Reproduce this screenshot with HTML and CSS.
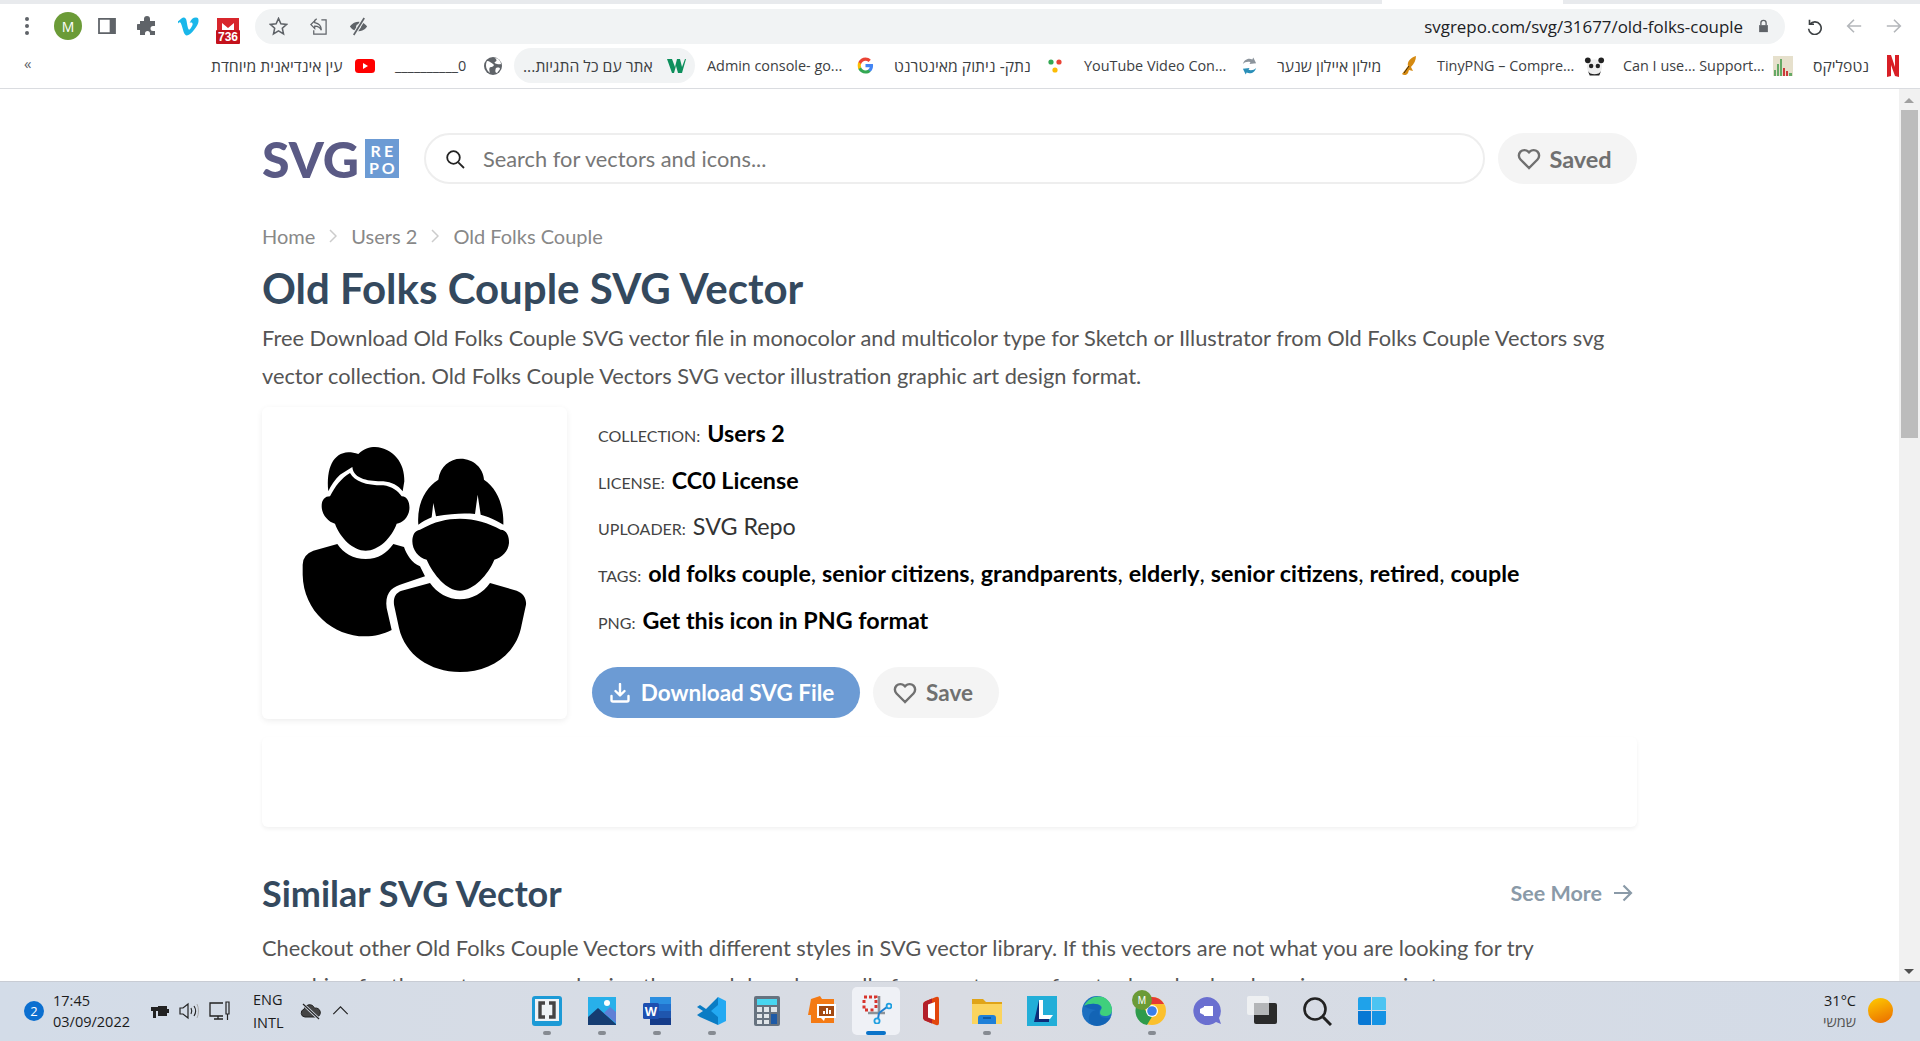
FILE: index.html
```html
<!DOCTYPE html>
<html>
<head>
  <title>Old Folks Couple SVG Vector</title>
  <link rel="stylesheet" href="styles.css">
</head>
<body>
  <div class="tabstrip"><div class="tab-gap"></div></div>

  <div class="toolbar">
    <div class="tool-dots"><i></i><i></i><i></i></div>
    <div class="avatar">M</div>
    <svg class="tool tool-panel" viewBox="0 0 20 18"><path d="M1 1h18v16H1z" fill="none" stroke="#5f6368" stroke-width="2"/><path d="M13 1h6v16h-6z" fill="#5f6368"/></svg>
    <svg class="tool tool-puzzle" viewBox="0 0 20 20"><path d="M7 3a3 3 0 0 1 6 0v2h5v5h-2a2.500 2.500 0 0 0 0 5h2v4h-5v-1.500a2.500 2.500 0 0 0-5 0V19H3v-5H1.500a3 3 0 0 1 0-6H3V5h4z" fill="#5f6368"/></svg>
    <svg class="tool tool-vimeo" viewBox="0 0 22 20"><path d="M21.500 5c-.1 2.200-1.600 5.100-4.600 9-3 4-5.600 5.900-7.700 5.900-1.300 0-2.400-1.200-3.300-3.600L4 9.800C3.300 7.400 2.600 6.200 1.800 6.200c-.2 0-.8.400-1.800 1.100L-1 6c1.100-1 2.200-2 3.300-2.900C3.800 1.800 4.900 1.100 5.700 1c1.800-.2 2.900 1.100 3.300 3.800.5 2.900.8 4.700 1 5.400.5 2.400 1.100 3.600 1.700 3.600.5 0 1.200-.7 2.100-2.200.9-1.400 1.400-2.500 1.500-3.300.1-1.200-.4-1.900-1.500-1.900-.5 0-1.100.1-1.600.4C13.800 2.700 16 1 19 1.100c2.100 0 2.600 1.400 2.500 3.900z" fill="#1ab7ea"/></svg>
    <div class="gmail">
      <svg viewBox="0 0 24 12"><path d="M1 0h22v12h-5V5l-6 5-6-5v7H1z" fill="#d8262c"/></svg>
      <span>736</span>
    </div>
    <div class="address">
      <div class="address-left">
        <svg class="tool-small" viewBox="0 0 20 20"><path d="M10 1.500l2.500 5.700 6 .6-4.500 4 1.300 6L10 14.700l-5.300 3.100 1.300-6-4.500-4 6-.6z" fill="none" stroke="#5f6368" stroke-width="1.600"/></svg>
        <svg class="tool-small" viewBox="0 0 20 20"><path d="M8 2L2 8l4 4V9.500c4 0 6 1.500 7 4.500 0-4-2-7-7-8V3.500zM13 3h5v15H5v-4" fill="none" stroke="#5f6368" stroke-width="1.300"/></svg>
        <svg class="tool-small" viewBox="0 0 20 20"><path d="M1 10s3-5 9-5 9 5 9 5-3 5-9 5-9-5-9-5z" fill="#5f6368"/><circle cx="10" cy="10" r="2.500" fill="#f1f3f4"/><path d="M16 1L5 19" stroke="#f1f3f4" stroke-width="4"/><path d="M16 1L5 19" stroke="#5f6368" stroke-width="1.800"/></svg>
      </div>
      <div class="address-right">
        <span class="url">svgrepo.com/svg/31677/old-folks-couple</span>
        <svg class="lock" viewBox="0 0 12 16"><path d="M3 7V4.500a3 3 0 0 1 6 0V7" fill="none" stroke="#5f6368" stroke-width="1.500"/><path d="M1 7h10v8H1z" fill="#5f6368"/></svg>
      </div>
    </div>
    <svg class="nav" viewBox="0 0 20 20"><path d="M5 3v5h5M5.500 8A7 7 0 1 1 4 13" fill="none" stroke="#3c4043" stroke-width="1.800"/></svg>
    <svg class="nav" viewBox="0 0 20 20"><path d="M18 10H3M10 3l-7 7 7 7" fill="none" stroke="#b4b7bb" stroke-width="1.800"/></svg>
    <svg class="nav" viewBox="0 0 20 20"><path d="M2 10h15M10 3l7 7-7 7" fill="none" stroke="#b4b7bb" stroke-width="1.800"/></svg>
  </div>

  <div class="bookmarks">
    <span class="more">«</span>
    <div class="bookmark he bm-india">
      <span>עין אינדיאנית מיוחדת</span>
      <svg viewBox="0 0 20 14"><rect width="20" height="14" rx="3.500" fill="#f00"/><path d="M8 4l5 3-5 3z" fill="#fff"/></svg>
    </div>
    <div class="bookmark bm-blank">
      <span>__________0</span>
      <svg viewBox="0 0 18 18"><circle cx="9" cy="9" r="9" fill="#5f6368"/><path d="M3 4c3 0 4 2 6 3s0 3-2 3-2 3-1 6C2 13 1 8 3 4zM11 1c2 2 2 3 0 4s3 3 6 2c0-3-3-6-6-6zM12 11c3-1 4 0 4 1l-3 4c-2 0-2-3-1-5z" fill="#fff"/></svg>
    </div>
    <div class="bookmark he bm-active">
      <span>...אתר עם כל התגיות</span>
      <svg viewBox="0 0 22 16"><path d="M0 1h5l3 8 2-8h3l2 8 3-8h1l-4 14h-4l-2-7-2 7H5z" fill="#0d8f5c"/></svg>
    </div>
    <div class="bookmark bm-admin">
      <span>Admin console- go...</span>
      <svg viewBox="0 0 18 18"><path d="M17 9.200c0-.6 0-1.200-.2-1.700H9v3.300h4.500c-.2 1-.8 1.900-1.700 2.500v2h2.700C16 14 17 11.800 17 9.200z" fill="#4285f4"/><path d="M9 17.500c2.200 0 4.100-.7 5.500-2l-2.700-2c-.8.500-1.700.8-2.800.8-2.200 0-4-1.500-4.700-3.400H1.500v2.100C2.900 15.700 5.700 17.500 9 17.500z" fill="#34a853"/><path d="M4.300 10.900c-.4-1.100-.4-2.300 0-3.400V5.400H1.500c-1 1.900-1 4.800 0 7.600z" fill="#fbbc05"/><path d="M9 4c1.200 0 2.300.4 3.200 1.200l2.400-2.400C13.100 1.400 11.200.600 9 .600 5.700.600 2.900 2.500 1.500 5.400l2.800 2.100C5 5.500 6.800 4 9 4z" fill="#ea4335"/></svg>
    </div>
    <div class="bookmark he bm-net">
      <span>נתק- ניתוק מאינטרנט</span>
      <svg viewBox="0 0 14 14"><circle cx="3" cy="3" r="2.600" fill="#34a853"/><circle cx="11" cy="3" r="2.600" fill="#ea4335"/><circle cx="7" cy="11" r="2.600" fill="#fbbc05"/></svg>
    </div>
    <div class="bookmark bm-ytc">
      <span>YouTube Video Con...</span>
      <svg viewBox="0 0 18 20"><path d="M2 8c1-4 5-7 10-5l1-2 3 6-7 1 1-2C7 5 4 6 2 8z" fill="#8c949c"/><path d="M16 12c-1 4-5 7-10 5l-1 2-3-6 7-1-1 2c3 1 6 0 8-2z" fill="#2a8fb8"/></svg>
    </div>
    <div class="bookmark he bm-dict">
      <span>מילון איילון שנער</span>
      <svg viewBox="0 0 16 20"><path d="M15 0C9 2 6 6 7 10L1 18c2 2 5 1 6-1l1-3 4 1-2-4c3-3 5-7 5-11z" fill="#d58a12"/><path d="M3 17l5-7" stroke="#3a2a10" stroke-width="1"/></svg>
    </div>
    <div class="bookmark bm-tiny">
      <span>TinyPNG – Compre...</span>
      <svg viewBox="0 0 22 20"><ellipse cx="11" cy="11" rx="8" ry="8" fill="#eee"/><circle cx="4" cy="4" r="3" fill="#222"/><circle cx="18" cy="4" r="3" fill="#222"/><circle cx="7.500" cy="10" r="2.300" fill="#222"/><circle cx="14.500" cy="10" r="2.300" fill="#222"/><path d="M4 15c2 5 12 5 14 0l-2 5H6z" fill="#222"/></svg>
    </div>
    <div class="bookmark bm-caniuse">
      <span>Can I use... Support...</span>
      <svg viewBox="0 0 20 20"><path d="M0 0h20v20H0z" fill="#e6e0cc"/><path d="M1 14h2v6H1zM4 8h2v12H4zM7 3h2v17H7z" fill="#66aa66"/><path d="M10 12h2v8h-2zM13 15h2v5h-2z" fill="#cc3b3b"/><path d="M16 17h3v3h-3z" fill="#66aa66"/></svg>
    </div>
    <div class="bookmark he bm-netflix">
      <span>נטפליקס</span>
      <svg viewBox="0 0 12 22"><path d="M0 0h4l4 12V0h4v22l-4-1L4 10v11l-4 1z" fill="#d81f26"/></svg>
    </div>
  </div>

  <div class="window">
    <div class="page">
      <div class="container">
        <header class="site-header">
          <a class="logo"><span class="logo-svg">SVG</span><span class="logo-repo"><b>RE</b><b>PO</b></span></a>
          <div class="search">
            <svg viewBox="0 0 20 20"><circle cx="8.500" cy="8.500" r="6.300" fill="none" stroke="#222" stroke-width="1.800"/><path d="M13.300 13.300L19 19" stroke="#222" stroke-width="1.800"/></svg>
            <span>Search for vectors and icons...</span>
          </div>
          <div class="btn btn-light btn-saved">
            <svg class="heart" viewBox="0 0 24 22"><path d="M12 20L3.500 11.500a5.500 5.500 0 0 1 0-7.800 5.500 5.500 0 0 1 7.800 0l.7.700.7-.7a5.500 5.500 0 0 1 7.800 7.800z" fill="none" stroke="#707070" stroke-width="2.400"/></svg>
            <span>Saved</span>
          </div>
        </header>

        <nav class="crumbs">
          <span>Home</span>
          <svg viewBox="0 0 8 14"><path d="M1 1l6 6-6 6" fill="none" stroke="#ccc" stroke-width="1.500"/></svg>
          <span>Users 2</span>
          <svg viewBox="0 0 8 14"><path d="M1 1l6 6-6 6" fill="none" stroke="#ccc" stroke-width="1.500"/></svg>
          <span>Old Folks Couple</span>
        </nav>

        <h1>Old Folks Couple SVG Vector</h1>
        <p class="lead">Free Download Old Folks Couple SVG vector file in monocolor and multicolor type for Sketch or Illustrator from Old Folks Couple Vectors svg vector collection. Old Folks Couple Vectors SVG vector illustration graphic art design format.</p>

        <section class="detail">
          <div class="preview">
            <svg viewBox="36 27 915 936">
              <path d="M262 438L190 458Q158 470 158 500L158 530C160 640 250 715 345 715C375 715 400 708 425 696L410 630C405 590 420 570 450 560L525 535L510 505C485 495 470 470 462 447L430 438C410 465 385 483 347 483C310 483 280 465 262 438Z"/>
              <path d="M240 295C255 265 275 240 300 225C315 250 345 262 400 262C425 265 445 280 455 295C475 295 480 320 478 335C475 360 455 375 440 377C425 420 385 458 347 458C310 458 270 420 255 377C235 372 215 350 215 325C215 305 225 295 240 295Z"/>
              <path d="M235 280C228 210 250 165 295 163C305 163 315 165 325 168C340 152 360 147 375 147C430 150 465 195 463 250L458 280C445 262 425 252 400 250C360 250 310 245 307 207L270 230C255 245 242 262 235 280Z"/>
              <path d="M540 555L455 578C435 585 430 600 432 620L447 690C465 770 540 822 630 822C720 822 800 770 815 680L828 620C830 600 818 585 800 578L720 555C700 585 665 604 630 604C595 604 560 585 540 555Z"/>
              <path d="M510 395C555 370 590 362 630 362C675 362 715 375 752 395C770 395 778 415 777 435C775 460 755 480 733 485C715 530 670 578 630 578C590 578 550 530 530 485C505 480 487 455 487 430C487 410 495 397 510 395Z"/>
              <path d="M505 380C500 320 525 270 565 245C570 205 600 182 632 182C670 182 700 210 702 245C740 270 762 320 760 380C730 360 695 350 692 350L683 290L675 348C650 345 610 345 558 355L550 315L545 358C530 365 515 372 505 380Z"/>
            </svg>
          </div>
          <div class="info">
            <div class="info-row"><small>COLLECTION:</small> <b>Users 2</b></div>
            <div class="info-row"><small>LICENSE:</small> <b>CC0 License</b></div>
            <div class="info-row"><small>UPLOADER:</small> <span class="plain">SVG Repo</span></div>
            <div class="info-row"><small>TAGS:</small> <b>old folks couple</b>, <b>senior citizens</b>, <b>grandparents</b>, <b>elderly</b>, <b>senior citizens</b>, <b>retired</b>, <b>couple</b></div>
            <div class="info-row"><small>PNG:</small> <b>Get this icon in PNG format</b></div>
            <div class="actions">
              <div class="btn btn-blue">
                <svg viewBox="0 0 20 20"><path d="M10 1v11M5.500 8l4.500 4.500L14.500 8M1.500 13v4a1.500 1.500 0 0 0 1.500 1.500h14a1.500 1.500 0 0 0 1.500-1.500v-4" fill="none" stroke="#fff" stroke-width="2.400" stroke-linecap="round" stroke-linejoin="round"/></svg>
                <span>Download SVG File</span>
              </div>
              <div class="btn btn-light btn-save">
                <svg class="heart" viewBox="0 0 24 22"><path d="M12 20L3.500 11.500a5.500 5.500 0 0 1 0-7.800 5.500 5.500 0 0 1 7.800 0l.7.700.7-.7a5.500 5.500 0 0 1 7.800 7.800z" fill="none" stroke="#707070" stroke-width="2.400"/></svg>
                <span>Save</span>
              </div>
            </div>
          </div>
        </section>

        <div class="ad-card"></div>

        <div class="similar-head">
          <h2>Similar SVG Vector</h2>
          <div class="see-more">
            <span>See More</span>
            <svg viewBox="0 0 20 18"><path d="M1 9h17M10.500 1.500L18 9l-7.500 7.500" fill="none" stroke="#8a9aa8" stroke-width="2.200"/></svg>
          </div>
        </div>
        <p class="lead">Checkout other Old Folks Couple Vectors with different styles in SVG vector library. If this vectors are not what you are looking for try<br>searching for the vector you need using the search bar above, all of our vectors are free to download and use in your projects.</p>
      </div>
    </div>
    <div class="scrollbar">
      <i class="arrow-up"></i>
      <div class="thumb"></div>
      <i class="arrow-down"></i>
    </div>
  </div>

  <footer class="taskbar">
    <div class="tray">
      <span class="badge">2</span>
      <div class="clock"><span>17:45</span><span>03/09/2022</span></div>
      <svg class="tray-plug" viewBox="0 0 20 18"><path d="M3 1v4M6 1v4M1 5h7v4H6v7H3V9H1z" fill="#222"/><path d="M8 4h9v10H8z" fill="#222"/><path d="M17 7h2v4h-2z" fill="#222"/></svg>
      <svg class="tray-sound" viewBox="0 0 20 18"><path d="M1 6h3l5-4v14l-5-4H1z" fill="none" stroke="#222" stroke-width="1.200"/><path d="M12 6c1 2 1 4 0 6M15 4c2 3 2 7 0 10" fill="none" stroke="#222" stroke-width="1.100"/><path d="M18 2c2 4 2 10 0 14" fill="none" stroke="#aaa" stroke-width="1"/></svg>
      <svg class="tray-net" viewBox="0 0 22 20"><path d="M14 2H1v13h13M5 18h9M9 15v3" fill="none" stroke="#222" stroke-width="1.300"/><path d="M17 1h3v12h-3zM18.500 13v6" fill="none" stroke="#222" stroke-width="1.200"/></svg>
      <div class="lang"><span>ENG</span><span>INTL</span></div>
      <svg class="tray-cloud" viewBox="0 0 22 18"><path d="M5 15a4 4 0 0 1-1-7.800 5.500 5.500 0 0 1 10.500-1A4.500 4.500 0 0 1 17 15z" fill="#444" stroke="#222"/><path d="M3 2l16 15" stroke="#d6dde8" stroke-width="3"/><path d="M3 2l16 15" stroke="#222" stroke-width="1.200"/></svg>
      <svg class="tray-up" viewBox="0 0 18 10"><path d="M1 9l8-8 8 8" fill="none" stroke="#222" stroke-width="1.300"/></svg>
    </div>

    <div class="apps">
      <div class="app running">
        <svg viewBox="0 0 30 30"><rect width="30" height="30" rx="3" fill="#1c9ad6"/><rect x="3" y="3" width="24" height="22" fill="#eef3f6"/><path d="M13 7H8v14h5M17 7h5v14h-5" fill="none" stroke="#444" stroke-width="3.400"/></svg>
      </div>
      <div class="app running">
        <svg viewBox="0 0 30 30"><path d="M1 1h28v28H1z" fill="#28b0ea"/><circle cx="20" cy="7" r="3" fill="#fff"/><path d="M1 21L11 12l18 16v1H1z" fill="#163d72"/><path d="M17 17l6-6 6 5v11z" fill="#5f7fd6"/></svg>
      </div>
      <div class="app running">
        <svg viewBox="0 0 30 30"><path d="M8 1h21v7H8z" fill="#2b8ee0"/><path d="M8 8h21v7H8z" fill="#2270cc"/><path d="M8 15h21v7H8z" fill="#1f56ae"/><path d="M8 22h21v7H8z" fill="#153c8a"/><rect x="1" y="7" width="16" height="16" rx="1.500" fill="#1d4fb0"/><text x="9" y="19.500" class="app-letter">W</text></svg>
      </div>
      <div class="app running">
        <svg viewBox="0 0 30 30"><path d="M21 1L9 13 3 9l-3 2 6 4-6 4 3 2L21 29z" fill="#0a7cc4"/><path d="M21 1l8 4v20l-8 4V21l-7-6 7-6z" fill="#23a9f2"/></svg>
      </div>
      <div class="app">
        <svg viewBox="0 0 30 30"><rect x="2" width="26" height="30" rx="2" fill="#66727f"/><path d="M5 3h20v6H5z" fill="#48d6f0"/><path d="M5 11h5v5H5zM12 11h5v5h-5zM19 11h6v5h-6zM5 18h5v4H5zM12 18h5v4h-5zM5 24h5v4H5zM12 24h5v4h-5z" fill="#dfe4e8"/><path d="M19 18h6v10h-6z" fill="#1d5aa6"/></svg>
      </div>
      <div class="app">
        <svg viewBox="0 0 30 30"><path d="M4 3l9-3 2 3h12v24H4v-8H1z" fill="#f47a14"/><path d="M10 8h19v14H18l-1 3-3-3h-4z" fill="#fff"/><path d="M12 10h15v10H12z" fill="#a34a12"/><path d="M16 18v-3h2v3zM19 18v-6h2v6zM22 18v-4h2v4z" fill="#fff"/></svg>
      </div>
      <div class="app active">
        <svg viewBox="0 0 30 30"><path d="M2 3h12v12" fill="none" stroke="#d8342c" stroke-width="3" stroke-dasharray="3 2"/><path d="M2 6v10h10" fill="none" stroke="#d8342c" stroke-width="3" stroke-dasharray="3 2.500"/><path d="M17 2v18M6 19h17" stroke="#8c9298" stroke-width="2.600" fill="none"/><path d="M17 19L25 13" stroke="#1f7fd0" stroke-width="2"/><circle cx="27" cy="12" r="2.400" fill="none" stroke="#1f9fe0" stroke-width="1.800"/><path d="M17 19l-1 6" stroke="#1f7fd0" stroke-width="2"/><circle cx="15" cy="27" r="2.600" fill="none" stroke="#1f9fe0" stroke-width="1.800"/></svg>
      </div>
      <div class="app">
        <svg viewBox="0 0 30 30"><path d="M9 5l10-4q3-1 3 2v24q0 3-3 2L9 25q-3-1-3-4V9q0-3 3-4z" fill="#e2460c"/><path d="M9 5l6-2.400V7L11 8.500V21.500l4 1.500v4.400L9 25q-3-1-3-4V9q0-3 3-4z" fill="#b3202a"/><path d="M11 8.500L18 6v18l-7-2.500z" fill="#fff"/></svg>
      </div>
      <div class="app running">
        <svg viewBox="0 0 30 30"><path d="M0 3h11l3 3h16v22H0z" fill="#e0a418"/><path d="M0 8h30v20H0z" fill="#fbd45e"/><path d="M9 19h12a3 3 0 0 1 3 3v6H6v-6a3 3 0 0 1 3-3z" fill="#1f80d8"/><path d="M11 22h8" stroke="#0d4f94" stroke-width="1.500"/></svg>
      </div>
      <div class="app">
        <svg viewBox="0 0 30 30"><path d="M0 0h30v30H0z" fill="#22aed8"/><path d="M7 26L12 4v18h10v4z" fill="#0c2c78"/><path d="M12 4h4v15h10l-3 4H12z" fill="#fff"/></svg>
      </div>
      <div class="app">
        <svg viewBox="0 0 30 30"><circle cx="15" cy="15" r="15" fill="#1c6fc0"/><path d="M2 10C6 2 14-1 21 1c5 2 9 7 9 13 0 4-3 6-7 6-3 0-5-1-5-3 0-4 3-4 1-7-3-3-11-3-17 0z" fill="#3fd07c"/><path d="M2 10c5-3 13-3 16 0 2 3-1 3-1 7 0 3 3 5 7 5 2 0 3 0 5-1-2 5-8 9-14 9-5 0-9-3-8-9 1-4 3-6 7-7-4-1-8-1-12-4z" fill="#0f5fb0" opacity=".7"/></svg>
      </div>
      <div class="app running chrome">
        <svg viewBox="0 0 34 36"><circle cx="20" cy="21" r="14" fill="#fbc02d"/><path d="M20 7a14 14 0 0 1 12 7H20a7 7 0 0 0-6 3.500L8 11a14 14 0 0 1 12-4z" fill="#e53935"/><path d="M8 11l6 10.500a7 7 0 0 0 7 3.500L15 35A14 14 0 0 1 8 11z" fill="#2e9b4b"/><circle cx="20" cy="21" r="6" fill="#fff"/><circle cx="20" cy="21" r="4.800" fill="#3b7ee8"/><circle cx="10" cy="10" r="10" fill="#6b9b37"/><text x="10" y="13.500" class="app-avatar">M</text></svg>
      </div>
      <div class="app">
        <svg viewBox="0 0 30 30"><path d="M15 1a14 14 0 1 0 9 25l5 2-2-6A14 14 0 0 0 15 1z" fill="#6a6fd0"/><path d="M8 13l4-2v-1h9v10h-9v-1l-4-2z" fill="#fff"/></svg>
      </div>
      <div class="app">
        <svg viewBox="0 0 30 30"><rect x="7" y="7" width="23" height="21" rx="2" fill="#2b2b2b"/><rect width="22" height="19" rx="2" fill="#eef0f2"/><rect x="7" y="7" width="15" height="12" fill="#b4b6b8"/></svg>
      </div>
      <div class="app">
        <svg viewBox="0 0 30 30"><circle cx="13" cy="13" r="10.500" fill="none" stroke="#222" stroke-width="2.600"/><path d="M21 21l8 8" stroke="#222" stroke-width="3"/></svg>
      </div>
      <div class="app">
        <svg viewBox="0 0 30 30"><path d="M1 3a2 2 0 0 1 2-2h11v13H1z" fill="#1fa2ea"/><path d="M15 1h12a2 2 0 0 1 2 2v11H15z" fill="#4cc4f2"/><path d="M1 15h13v14H3a2 2 0 0 1-2-2z" fill="#0878d4"/><path d="M15 15h14v12a2 2 0 0 1-2 2H15z" fill="#1593e4"/></svg>
      </div>
    </div>

    <div class="weather">
      <div class="weather-text"><span>31°C</span><span class="weather-sub">שמשי</span></div>
      <div class="sun"></div>
    </div>
  </footer>
</body>
</html>
```

FILE: styles.css
```css
* {
  box-sizing: border-box;
}
body {
  margin: 0;
  height: 100vh;
  overflow: hidden;
  display: flex;
  flex-direction: column;
  font-family: "Open Sans", "Liberation Sans", sans-serif;
  background: #fff;
}
svg {
  display: block;
  flex: none;
}

/* browser chrome */
.tabstrip {
  height: 4px;
  background: #e8eaed;
  flex: none;
  display: flex;
  justify-content: flex-end;
}
.tab-gap {
  width: 181px;
  margin-right: 357px;
  background: #fff;
}
.toolbar {
  height: 44px;
  flex: none;
  display: flex;
  align-items: center;
  padding-left: 25px;
}
.tool-dots {
  width: 4px;
  display: flex;
  flex-direction: column;
  gap: 3px;
}
.tool-dots i {
  width: 4px;
  height: 4px;
  border-radius: 50%;
  background: #5f6368;
}
.avatar {
  margin-left: 25px;
  width: 28px;
  height: 28px;
  border-radius: 50%;
  background: #6b9b37;
  color: #fff;
  font-size: 14px;
  display: flex;
  align-items: center;
  justify-content: center;
}
.tool-panel {
  width: 18px;
  height: 16px;
  margin-left: 16px;
}
.tool-puzzle {
  width: 20px;
  height: 20px;
  margin-left: 21px;
}
.tool-vimeo {
  width: 21px;
  height: 20px;
  margin-left: 21px;
}
.gmail {
  margin-left: 17px;
  width: 24px;
  align-self: flex-start;
  margin-top: 14px;
}
.gmail svg {
  width: 24px;
  height: 12px;
}
.gmail span {
  display: block;
  background: #c4121c;
  color: #fff;
  font-family: "Liberation Sans", sans-serif;
  font-size: 12px;
  font-weight: 700;
  line-height: 14px;
  text-align: center;
  border-radius: 1px;
}
.address {
  margin-left: 15px;
  width: 1530px;
  height: 35px;
  background: #f1f3f4;
  border-radius: 18px;
  display: flex;
  align-items: center;
  justify-content: space-between;
  padding: 0 16px 0 14px;
}
.address-left {
  display: flex;
  gap: 21px;
  align-items: center;
}
.tool-small {
  width: 19px;
  height: 19px;
}
.address-right {
  display: flex;
  align-items: center;
  gap: 15px;
}
.url {
  font-size: 16.900px;
  color: #202124;
  white-space: nowrap;
}
.lock {
  width: 11px;
  height: 14px;
}
.nav {
  width: 18px;
  height: 18px;
  margin-left: 22px;
}
.address + .nav {
  margin-left: 20px;
}
.bookmarks {
  height: 41px;
  flex: none;
  display: flex;
  align-items: flex-start;
  border-bottom: 1px solid #dadce0;
  padding-left: 24px;
  color: #3c4043;
}
.more {
  font-size: 15px;
  width: 187px;
  height: 35px;
  line-height: 30px;
  color: #5f6368;
}
.bookmark {
  height: 35px;
  display: flex;
  align-items: center;
  gap: 12px;
  margin-right: 20px;
  font-size: 14.400px;
  white-space: nowrap;
}
.bookmark.he {
  font-size: 15.700px;
}
.bookmark svg {
  width: 20px;
  height: 20px;
}
.bm-india span {
  width: 132px;
}
.bm-blank span {
  width: 77px;
}
.bm-blank svg {
  width: 18px;
  height: 18px;
}
.bm-active {
  background: #f1f3f4;
  border-radius: 18px;
  padding: 0 6px 0 9px;
  margin-right: 12px;
  margin-left: -8px;
  gap: 11px;
}
.bm-active span {
  width: 133px;
}
.bm-active svg {
  width: 22px;
  height: 16px;
}
.bm-admin span {
  width: 138px;
}
.bm-admin svg {
  width: 17px;
  height: 17px;
}
.bm-net {
  gap: 16px;
  margin-right: 22px;
}
.bm-net span {
  width: 138px;
}
.bm-net svg {
  width: 14px;
  height: 14px;
}
.bm-ytc {
  gap: 13px;
  margin-right: 19px;
}
.bm-ytc span {
  width: 144px;
}
.bm-ytc svg {
  width: 17px;
  height: 20px;
}
.bm-dict {
  gap: 16px;
}
.bm-dict span {
  width: 108px;
}
.bm-dict svg {
  width: 16px;
  height: 20px;
}
.bm-tiny {
  gap: 10px;
  margin-right: 18px;
}
.bm-tiny span {
  width: 137px;
}
.bm-tiny svg {
  width: 21px;
}
.bm-caniuse span {
  width: 138px;
}
.bm-netflix {
  gap: 16px;
  margin-right: 0;
}
.bm-netflix span {
  width: 58px;
}
.bm-netflix svg {
  width: 12px;
  height: 22px;
}

/* page */
.window {
  flex: 1;
  min-height: 0;
  display: flex;
}
.page {
  flex: 1;
  min-width: 0;
  overflow: hidden;
}
.container {
  width: 1375px;
  margin-left: 262px;
  font-family: Lato, sans-serif;
  color: #555;
}
.site-header {
  display: flex;
  align-items: center;
  padding-top: 44px;
  height: 95px;
}
.logo {
  display: flex;
  align-items: center;
  width: 135px;
  gap: 6px;
}
.logo-svg {
  font-size: 50px;
  font-weight: 900;
  color: #5a5a85;
  line-height: 40px;
  flex: none;
}
.logo-repo {
  width: 34px;
  height: 39px;
  background: #6c9bd4;
  color: #fff;
  display: flex;
  flex-direction: column;
  align-items: center;
  justify-content: center;
  font-size: 16px;
  line-height: 17px;
  letter-spacing: 3px;
  padding-left: 3px;
  flex: none;
}
.search {
  margin-left: 27px;
  width: 1062px;
  height: 51px;
  border: 2px solid #eee;
  border-radius: 26px;
  display: flex;
  align-items: center;
  padding-left: 19px;
  gap: 18px;
  font-size: 21.800px;
  color: #777;
}
.search svg {
  width: 20px;
  height: 20px;
}
.btn {
  border-radius: 26px;
  height: 51px;
  display: flex;
  align-items: center;
  justify-content: center;
  font-size: 22.500px;
  font-weight: 700;
}
.btn-light {
  background: #f4f4f4;
  color: #707070;
}
.heart {
  width: 24px;
  height: 22px;
}
.btn-saved {
  margin-left: 13px;
  width: 139px;
  gap: 8px;
  padding-right: 6px;
  font-size: 23.500px;
}
.crumbs {
  margin-top: 40px;
  display: flex;
  align-items: center;
  gap: 14px;
  font-size: 20px;
  color: #888;
  height: 24px;
}
.crumbs svg {
  width: 8px;
  height: 14px;
}
h1 {
  margin: 12px 0 0;
  font-size: 42px;
  line-height: 56px;
  font-weight: 700;
  color: #34495e;
}
.lead {
  margin: 3px 0 0;
  font-size: 21.800px;
  line-height: 38px;
  color: #555;
}
.detail {
  margin-top: 12px;
  display: flex;
}
.preview {
  width: 305px;
  height: 312px;
  border-radius: 6px;
  box-shadow: 0 2px 6px rgba(0, 0, 0, 0.07);
  flex: none;
}
.preview svg {
  width: 305px;
  height: 312px;
}
.info {
  margin-left: 31px;
  padding-top: 3px;
}
.info-row {
  line-height: 46.700px;
  height: 46.700px;
  font-size: 23.300px;
  color: #000;
  white-space: nowrap;
}
.info-row small {
  font-size: 16px;
  color: #444;
  margin-right: 1px;
}
.info-row b {
  font-weight: 700;
}
.info-row .plain {
  color: #333;
}
.actions {
  margin-top: 24px;
  margin-left: -6px;
  display: flex;
  gap: 13px;
}
.btn-blue {
  width: 268px;
  background: #6c9bd4;
  color: #fff;
  gap: 11px;
  padding-right: 8px;
}
.btn-blue svg {
  width: 20px;
  height: 20px;
}
.btn-save {
  width: 126px;
  gap: 9px;
  padding-right: 6px;
}
.ad-card {
  margin-top: 18px;
  height: 90px;
  border-radius: 6px;
  box-shadow: 0 2px 4px rgba(0, 0, 0, 0.06);
}
.similar-head {
  margin-top: 43px;
  display: flex;
  align-items: center;
  justify-content: space-between;
  height: 46px;
  padding-right: 4px;
}
h2 {
  margin: 0;
  font-size: 36px;
  font-weight: 700;
  color: #34495e;
}
.see-more {
  display: flex;
  align-items: center;
  gap: 11px;
  font-size: 21.500px;
  font-weight: 700;
  color: #8a9aa8;
}
.see-more svg {
  width: 20px;
  height: 18px;
}
.similar-head + .lead {
  margin-top: 13px;
}

/* scrollbar */
.scrollbar {
  width: 21px;
  flex: none;
  background: #f1f1f1;
  position: relative;
  padding: 21px 2px 0;
}
.thumb {
  height: 328px;
  background: #bcbcbc;
}
.arrow-up,
.arrow-down {
  position: absolute;
  left: 5px;
  width: 0;
  height: 0;
  border-left: 5px solid transparent;
  border-right: 5px solid transparent;
}
.arrow-up {
  top: 9px;
  border-bottom: 5px solid #a0a0a0;
}
.arrow-down {
  bottom: 7px;
  border-top: 5px solid #505050;
}

/* taskbar */
.taskbar {
  height: 60px;
  flex: none;
  background: linear-gradient(90deg, #d3dce8, #d9dce3 50%, #d3dbe7);
  border-top: 1px solid #c8ccd4;
  padding-bottom: 2px;
  display: flex;
  align-items: center;
  color: #1b1b1b;
  font-size: 14.500px;
}
.tray {
  width: 519px;
  flex: none;
  display: flex;
  align-items: center;
  padding-left: 24px;
  height: 100%;
}
.badge {
  width: 20px;
  height: 20px;
  border-radius: 50%;
  background: #0b6fd0;
  color: #fff;
  font-size: 13px;
  text-align: center;
  line-height: 20px;
}
.clock,
.lang,
.weather-text {
  display: flex;
  flex-direction: column;
  line-height: 21px;
}
.clock {
  margin-left: 9px;
}
.tray-plug {
  width: 20px;
  height: 18px;
  margin-left: 20px;
}
.tray-sound {
  width: 20px;
  height: 18px;
  margin-left: 9px;
}
.tray-net {
  width: 22px;
  height: 20px;
  margin-left: 10px;
}
.lang {
  margin-left: 22px;
  line-height: 23px;
}
.tray-cloud {
  width: 22px;
  height: 18px;
  margin-left: 16px;
}
.tray-up {
  width: 17px;
  height: 9px;
  margin-left: 10px;
}
.apps {
  display: flex;
  height: 100%;
  align-items: center;
}
.app {
  width: 55px;
  height: 100%;
  display: flex;
  align-items: center;
  justify-content: center;
  position: relative;
}
.app svg {
  width: 30px;
  height: 30px;
}
.app.running::after {
  content: "";
  position: absolute;
  bottom: 4px;
  left: 24px;
  width: 8px;
  height: 4px;
  border-radius: 2px;
  background: #868b92;
}
.app.active::before {
  content: "";
  position: absolute;
  left: 3px;
  top: 5px;
  width: 48px;
  height: 48px;
  border-radius: 5px;
  background: #eff1f6;
}
.app.active svg {
  position: relative;
  margin-top: -4px;
}
.app.active::after {
  content: "";
  position: absolute;
  bottom: 4px;
  left: 17px;
  width: 20px;
  height: 4px;
  border-radius: 2px;
  background: #0a73c9;
}
.app.chrome svg {
  width: 34px;
  height: 36px;
  margin-top: -6px;
  margin-left: -5px;
}
.app-letter,
.app-avatar {
  font-family: "Liberation Sans", sans-serif;
  fill: #fff;
  text-anchor: middle;
}
.app-letter {
  font-size: 13px;
  font-weight: 700;
}
.app-avatar {
  font-size: 10px;
}
.weather {
  margin-left: auto;
  display: flex;
  align-items: center;
  gap: 12px;
  padding-right: 27px;
}
.weather-text {
  text-align: right;
}
.weather-sub {
  color: #555;
}
.sun {
  width: 25px;
  height: 25px;
  border-radius: 50%;
  background: linear-gradient(160deg, #ffcc00, #ea6a00);
}
```
